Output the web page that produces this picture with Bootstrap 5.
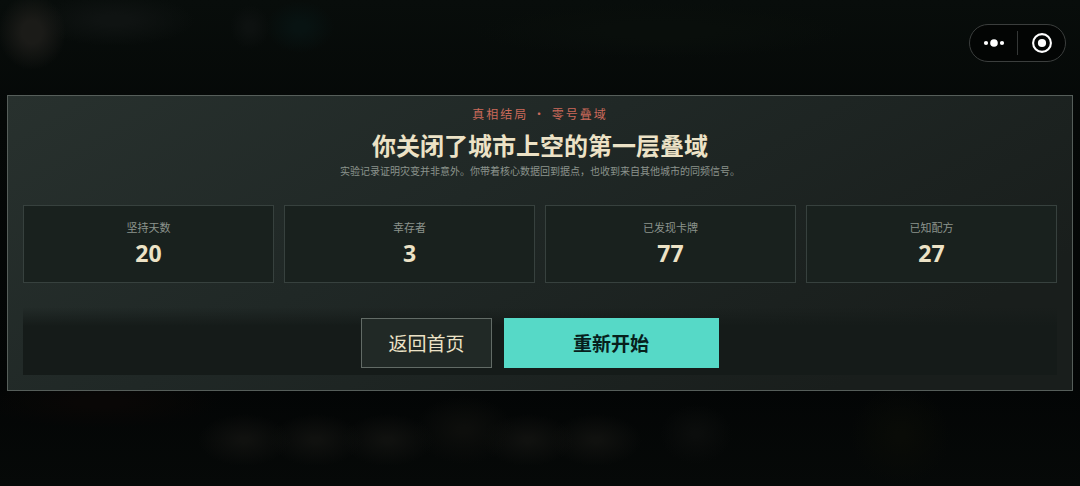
<!DOCTYPE html>
<html lang="zh-CN">
<head>
<meta charset="utf-8">
<meta name="viewport" content="width=device-width, initial-scale=1">
<title>真相结局 · 零号叠域</title>
<link rel="stylesheet" href="https://cdn.jsdelivr.net/npm/bootstrap@5.3.0/dist/css/bootstrap.min.css">
<style>
  body {
    padding: 0 7px;
    font-family: "Noto Sans CJK SC", "Noto Sans", sans-serif;
    color: #ece2c6;
    background-color: #050908;
    /* dimmed game board behind the dialog */
    background-image:
      radial-gradient(ellipse 34px 38px at 32px 32px, #1b1b18 30%, transparent),
      radial-gradient(ellipse 80px 26px at 115px 20px, #0f1312 20%, transparent),
      radial-gradient(ellipse 20px 22px at 250px 27px, #0d1110 20%, transparent),
      radial-gradient(ellipse 34px 26px at 300px 27px, #081312 20%, transparent),
      radial-gradient(ellipse 190px 28px at 660px 30px, #090e0b 30%, transparent),
      radial-gradient(ellipse 46px 26px at 244px 440px, #10110f 10%, transparent),
      radial-gradient(ellipse 46px 26px at 316px 440px, #10110f 10%, transparent),
      radial-gradient(ellipse 46px 26px at 388px 440px, #10110f 10%, transparent),
      radial-gradient(ellipse 50px 34px at 464px 430px, #0d0e0c 10%, transparent),
      radial-gradient(ellipse 46px 26px at 528px 440px, #10110f 10%, transparent),
      radial-gradient(ellipse 46px 26px at 596px 440px, #10110f 10%, transparent),
      radial-gradient(ellipse 36px 30px at 696px 434px, #0b0d0c 10%, transparent),
      radial-gradient(ellipse 50px 50px at 900px 436px, #090b07 10%, transparent),
      radial-gradient(ellipse 120px 26px at 100px 402px, #090706 20%, transparent),
      linear-gradient(#080d0b, #050807 24%, #030505 80%, #060908);
    background-repeat: no-repeat;
  }
  .ending-panel {
    padding: 8px 15px 15px;
    border: 1px solid #565e5a;
    background: linear-gradient(150deg, #28312e, #202826 40%, #191e1c 85%);
  }
  .ending-tag { font-size: 12px; line-height: 20px; letter-spacing: 2px; color: #cb6a5b; }
  .ending-title { margin: 5px 0 0; font-size: 24px; line-height: 32px; font-weight: 700; }
  .ending-text { font-size: 10px; line-height: 20px; color: #8b938c; }
  .stat-grid { gap: 10px; margin-top: 24px; }
  .stat-box { padding: 11px 8px 13px; border: 1px solid #37413e; background: #19211e; }
  .stat-name { font-size: 11px; line-height: 20px; font-weight: 400; color: #8b938c; }
  .stat-value { font-size: 23px; line-height: 32px; font-weight: 700; font-family: "Noto Sans", sans-serif; }
  .action-bar {
    gap: 12px;
    margin-top: 24px;
    padding: 11px 8px 7px;
    background: linear-gradient(transparent, #151b19 28%);
  }
  .action-bar .btn { height: 50px; padding: 0 26px; border-radius: 0; font-size: 19px; line-height: 28px; }
  .btn-home { --bs-btn-color: #ece2c6; --bs-btn-bg: #212926; --bs-btn-border-color: #626b66; --bs-btn-hover-color: #fff; --bs-btn-hover-bg: #2a3431; --bs-btn-hover-border-color: #7c8580; }
  .btn-restart { --bs-btn-color: #07201c; --bs-btn-bg: #56d9c7; --bs-btn-border-color: #56d9c7; --bs-btn-hover-color: #07201c; --bs-btn-hover-bg: #6fe3d3; --bs-btn-hover-border-color: #6fe3d3; min-width: 215px; }
  .capsule { top: 24px; right: 14px; width: 97px; height: 38px; border: 1px solid #3b3e3d; background: #030504; }
  .capsule .btn { line-height: 0; border: 0; }
  .capsule-line { width: 1px; height: 24px; background: #343736; }
</style>
</head>
<body class="min-vh-100 d-flex flex-column justify-content-center">

<nav class="capsule position-absolute d-flex align-items-center rounded-pill" aria-label="小程序菜单">
  <button type="button" class="btn p-0 flex-fill" aria-label="更多">
    <svg width="22" height="22" viewBox="0 0 22 22" fill="#fff" aria-hidden="true">
      <circle cx="3" cy="11" r="2.1"/><circle cx="11" cy="11" r="3.8"/><circle cx="19" cy="11" r="2.1"/>
    </svg>
  </button>
  <span class="capsule-line"></span>
  <button type="button" class="btn p-0 flex-fill" aria-label="关闭">
    <svg width="22" height="22" viewBox="0 0 22 22" aria-hidden="true">
      <circle cx="11" cy="11" r="8.9" fill="none" stroke="#fff" stroke-width="2.1"/><circle cx="11" cy="11" r="4.1" fill="#fff"/>
    </svg>
  </button>
</nav>

<main class="ending-panel text-center">
  <header>
    <div class="ending-tag">真相结局 · 零号叠域</div>
    <h1 class="ending-title">你关闭了城市上空的第一层叠域</h1>
    <p class="ending-text mb-0">实验记录证明灾变并非意外。你带着核心数据回到据点，也收到来自其他城市的同频信号。</p>
  </header>

  <dl class="stat-grid d-flex mb-0">
    <div class="stat-box flex-fill w-100"><dt class="stat-name">坚持天数</dt><dd class="stat-value mb-0">20</dd></div>
    <div class="stat-box flex-fill w-100"><dt class="stat-name">幸存者</dt><dd class="stat-value mb-0">3</dd></div>
    <div class="stat-box flex-fill w-100"><dt class="stat-name">已发现卡牌</dt><dd class="stat-value mb-0">77</dd></div>
    <div class="stat-box flex-fill w-100"><dt class="stat-name">已知配方</dt><dd class="stat-value mb-0">27</dd></div>
  </dl>

  <div class="action-bar d-flex justify-content-center">
    <button type="button" class="btn btn-home">返回首页</button>
    <button type="button" class="btn btn-restart fw-bold">重新开始</button>
  </div>
</main>

<script src="https://cdn.jsdelivr.net/npm/bootstrap@5.3.0/dist/js/bootstrap.bundle.min.js"></script>
</body>
</html>
